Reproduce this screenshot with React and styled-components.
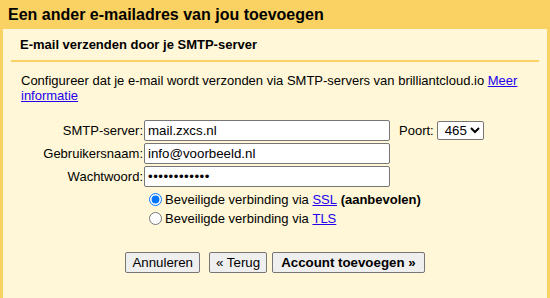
import React from 'react';
import styled, { createGlobalStyle } from 'styled-components';

const GlobalStyle = createGlobalStyle`
  html, body {
    margin: 0;
    padding: 0;
    background: #fad163;
    font-family: "Liberation Sans", Arial, sans-serif;
    color: #000;
  }
`;

const Frame = styled.div`
  width: 550px;
  height: 298px;
  background: #fad163;
  display: flex;
  flex-direction: column;
  overflow: hidden;
`;

const Header = styled.div`
  height: 29px;
  display: flex;
  align-items: center;
  padding-left: 8px;
  font-size: 16px;
  font-weight: bold;
`;

const Panel = styled.div`
  flex: 1;
  margin: 0 3px;
  background: #fff7d7;
  display: flex;
  flex-direction: column;
`;

const SubTitle = styled.div`
  height: 31px;
  display: flex;
  align-items: center;
  padding-left: 17px;
  font-size: 13px;
  font-weight: bold;
`;

const Rule = styled.div`
  height: 2px;
  margin: 0 8px;
  background: #fad163;
`;

const Intro = styled.p`
  margin: 11px 0 0 18px;
  padding-right: 6px;
  font-size: 13px;
  line-height: 15px;
`;

const Link = styled.a`
  color: #2200ee;
  text-decoration: underline;
  cursor: pointer;
`;

const Form = styled.div`
  margin-top: 17px;
  display: grid;
  grid-template-columns: 140px 246px auto;
  column-gap: 1px;
  row-gap: 2px;
  font-size: 13px;
`;

const Label = styled.label`
  text-align: right;
  align-self: center;
`;

const Input = styled.input`
  width: 246px;
  height: 21px;
  box-sizing: border-box;
  border: 1px solid #767676;
  border-radius: 2px;
  padding: 1px 3px;
  font-family: "Liberation Sans", Arial, sans-serif;
  font-size: 13.3px;
  background: #fff;
  letter-spacing: ${({ $secret }) => ($secret ? '0.5px' : 'normal')};
`;

const PortBox = styled.div`
  display: flex;
  align-items: center;
  gap: 3px;
  padding-left: 8px;
`;

const Select = styled.select`
  height: 19px;
  width: 47px;
  border: 1px solid #767676;
  border-radius: 2px;
  background: #fff;
  font-family: "Liberation Sans", Arial, sans-serif;
  font-size: 13.3px;
  padding: 0 0 0 3px;
`;

const Options = styled.div`
  grid-column: 2 / 4;
  display: flex;
  flex-direction: column;
  gap: 4px;
  margin-top: 3px;
`;

const RadioRow = styled.label`
  display: flex;
  align-items: center;
  font-size: 13px;
  line-height: 15px;
`;

const Radio = styled.input`
  margin: 0 3px 0 5px;
  width: 13px;
  height: 13px;
  accent-color: #0075ff;
`;

const Buttons = styled.div`
  margin-top: 26px;
  display: flex;
  justify-content: center;
  padding-right: 0;
`;

const Button = styled.button`
  height: 21px;
  margin-left: ${({ $gap }) => $gap || 0}px;
  padding: 1px ${({ $primary }) => ($primary ? 8 : 6)}px;
  border: 1px solid #767676;
  border-radius: 2px;
  background: #efefef;
  font-family: "Liberation Sans", Arial, sans-serif;
  font-size: 13.3px;
  font-weight: ${({ $primary }) => ($primary ? 'bold' : 'normal')};
  color: #000;
`;

export default function App() {
  return (
    <>
      <GlobalStyle />
      <Frame>
        <Header>Een ander e-mailadres van jou toevoegen</Header>
        <Panel>
          <SubTitle>E-mail verzenden door je SMTP-server</SubTitle>
          <Rule />
          <Intro>
            Configureer dat je e-mail wordt verzonden via SMTP-servers van brilliantcloud.io{' '}
            <Link>Meer informatie</Link>
          </Intro>
          <Form>
            <Label>SMTP-server:</Label>
            <Input defaultValue="mail.zxcs.nl" />
            <PortBox>
              <span>Poort:</span>
              <Select defaultValue="465">
                <option>465</option>
                <option>587</option>
              </Select>
            </PortBox>
            <Label>Gebruikersnaam:</Label>
            <Input defaultValue="info@voorbeeld.nl" />
            <span />
            <Label>Wachtwoord:</Label>
            <Input type="password" defaultValue="wachtwoord12" $secret />
            <span />
            <Options>
              <RadioRow>
                <Radio type="radio" name="sec" defaultChecked />
                Beveiligde verbinding via&nbsp;<Link>SSL</Link>&nbsp;<b>(aanbevolen)</b>
              </RadioRow>
              <RadioRow>
                <Radio type="radio" name="sec" />
                Beveiligde verbinding via&nbsp;<Link>TLS</Link>
              </RadioRow>
            </Options>
          </Form>
          <Buttons>
            <Button>Annuleren</Button>
            <Button $gap={9}>« Terug</Button>
            <Button $gap={5} $primary>Account toevoegen »</Button>
          </Buttons>
        </Panel>
      </Frame>
    </>
  );
}
